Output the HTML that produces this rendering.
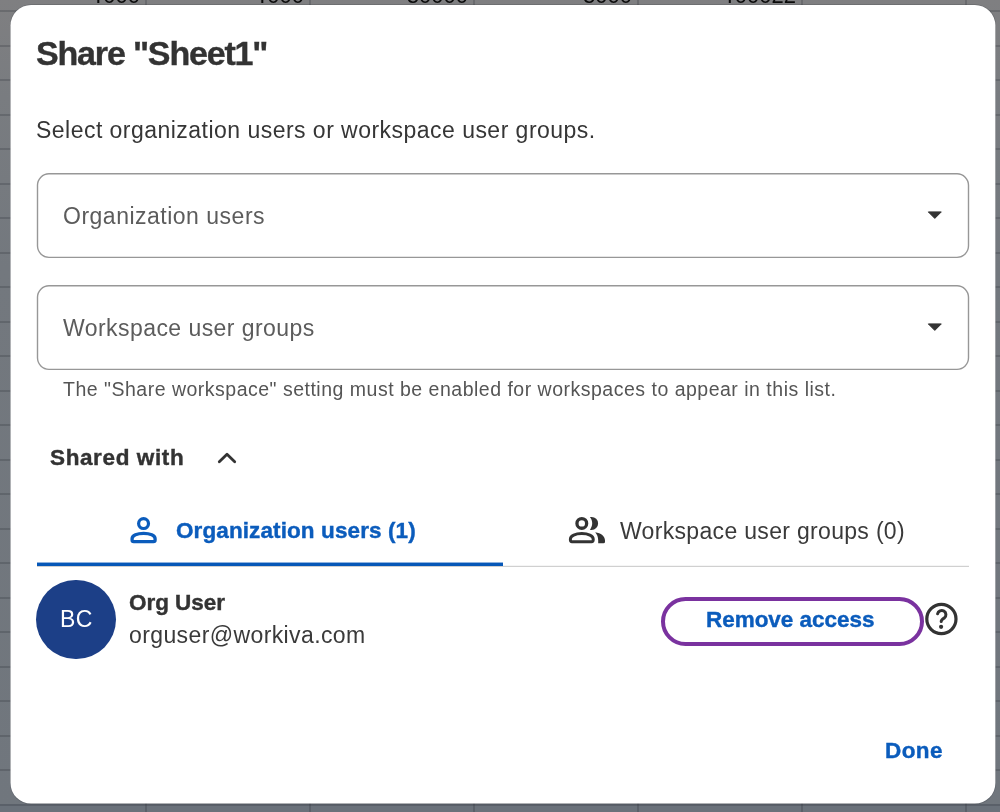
<!DOCTYPE html>
<html>
<head>
<meta charset="utf-8">
<title>Share Sheet1</title>
<style>
html,body{margin:0;padding:0;}
body{width:1000px;height:812px;overflow:hidden;position:relative;font-family:"Liberation Sans",sans-serif;
background:linear-gradient(180deg,#7f7f81 0%,#797c80 12%,#73787e 33%,#70767d 100%);}
.hl{position:absolute;left:0;width:1000px;height:2px;background:rgba(45,50,58,0.26);}
.vl{position:absolute;top:0;width:2px;height:812px;background:rgba(45,50,58,0.26);}
.num{position:absolute;top:-14.6px;font-size:22px;color:#0a0a0a;text-align:right;width:150px;white-space:nowrap;line-height:1;will-change:transform;}
#modal{position:absolute;left:0;top:0;}
#bot{position:absolute;left:0;top:804px;width:1000px;height:8px;background:#6a717a;}
.num b{display:inline-block;width:12.2px;text-align:center;font-weight:normal;text-indent:2px;}
#shared,#name,#title{-webkit-text-stroke:0.4px #333;}#tab1,#btntxt,#done{-webkit-text-stroke:0.4px #0b5cbc;}
.abs{position:absolute;white-space:nowrap;line-height:1;will-change:transform;}
#title{left:36px;top:35.5px;font-size:34px;font-weight:bold;color:#333;letter-spacing:-1.17px;}
#sub{left:36px;top:119px;font-size:23px;color:#363636;letter-spacing:0.47px;}
.sel{position:absolute;left:36.5px;width:932.5px;height:84px;box-sizing:border-box;}
.sel span{position:absolute;left:26.5px;top:31.1px;font-size:23px;color:#5c5c5c;line-height:1;white-space:nowrap;letter-spacing:0.5px;will-change:transform;}
#help{left:63px;top:380px;font-size:19.5px;color:#555;letter-spacing:0.5px;}
#shared{left:49.6px;top:446.5px;font-size:22.5px;font-weight:bold;color:#333;letter-spacing:0.62px;}
#tab1{left:175.7px;top:519.6px;font-size:22.5px;font-weight:bold;color:#0b5cbc;letter-spacing:0.1px;}
#tab2{left:620px;top:519.7px;font-size:23px;color:#3a3a3a;letter-spacing:0.32px;}
#tabline{display:none}
#tabsel{display:none}
#avatar{position:absolute;left:36.3px;top:579.8px;width:79.4px;height:79.4px;border-radius:50%;background:#1c3f87;}
#bc{left:60.2px;top:608px;font-size:23px;color:#fff;letter-spacing:0.3px;}
#name{left:128.6px;top:591.8px;font-size:22.5px;font-weight:bold;color:#333;letter-spacing:-0.05px;}
#email{left:128.8px;top:623.7px;font-size:23px;color:#3a3a3a;letter-spacing:0.39px;}
#btn{position:absolute;left:661.2px;top:597.2px;width:263.2px;height:48.6px;border:4px solid #7a329f;border-radius:25px;box-sizing:border-box;}
#btntxt{left:705.5px;top:608.8px;font-size:22.5px;font-weight:bold;color:#0b5cbc;letter-spacing:-0.04px;}
#done{left:885px;top:739.8px;font-size:22.5px;font-weight:bold;color:#0b5cbc;letter-spacing:0.4px;}
svg{position:absolute;left:0;top:0;}
</style>
</head>
<body>
<div id="grid"><div id="bot"></div>
<div class="hl" style="top:10px"></div><div class="hl" style="top:44.5px"></div><div class="hl" style="top:79px"></div><div class="hl" style="top:113.5px"></div><div class="hl" style="top:148px"></div><div class="hl" style="top:182.5px"></div><div class="hl" style="top:217px"></div><div class="hl" style="top:251.5px"></div><div class="hl" style="top:286px"></div><div class="hl" style="top:320.5px"></div><div class="hl" style="top:355px"></div><div class="hl" style="top:389.5px"></div><div class="hl" style="top:424px"></div><div class="hl" style="top:458.5px"></div><div class="hl" style="top:493px"></div><div class="hl" style="top:527.5px"></div><div class="hl" style="top:562px"></div><div class="hl" style="top:596.5px"></div><div class="hl" style="top:631px"></div><div class="hl" style="top:665.5px"></div><div class="hl" style="top:700px"></div><div class="hl" style="top:734.5px"></div><div class="hl" style="top:769px"></div><div class="hl" style="top:803.5px"></div>
<div class="vl" style="left:145px"></div><div class="vl" style="left:309px"></div><div class="vl" style="left:473px"></div><div class="vl" style="left:637px"></div><div class="vl" style="left:801px"></div><div class="vl" style="left:965px"></div>
<div class="num" style="left:-10.5px"><b>I</b>000</div><div class="num" style="left:153.5px"><b>I</b>000</div><div class="num" style="left:317.5px">30000</div><div class="num" style="left:481.8px">3000</div><div class="num" style="left:646px"><b>I</b>00022</div>
</div>
<svg id="modal" width="1000" height="812" viewBox="0 0 1000 812"><rect x="10" y="4.3" width="986" height="800" rx="21" fill="rgba(40,44,52,0.25)"/><rect x="10.5" y="5" width="984.9" height="798.6" rx="20.5" fill="#fff"/></svg>
<div class="abs" id="title">Share "Sheet1"</div>
<div class="abs" id="sub">Select organization users or workspace user groups.</div>
<div class="sel" style="top:173.5px"><span>Organization users</span></div>
<div class="sel" style="top:285.5px"><span style="letter-spacing:0.44px">Workspace user groups</span></div>
<div class="abs" id="help">The "Share workspace" setting must be enabled for workspaces to appear in this list.</div>
<div class="abs" id="shared">Shared with</div>
<div class="abs" id="tab1">Organization users (1)</div>
<div class="abs" id="tab2">Workspace user groups (0)</div>
<div id="tabline"></div><div id="tabsel"></div>
<div id="avatar"></div>
<div class="abs" id="bc">BC</div>
<div class="abs" id="name">Org User</div>
<div class="abs" id="email">orguser@workiva.com</div>
<div id="btn"></div>
<div class="abs" id="btntxt">Remove access</div>
<div class="abs" id="done">Done</div>
<svg width="1000" height="812" viewBox="0 0 1000 812">
<rect x="37" y="565.8" width="932" height="1.1" fill="#cbcbcb"/><rect x="37" y="562.55" width="466" height="3.45" fill="#0758b8"/>
<rect x="37.5" y="173.8" width="931" height="83.55" rx="11.5" fill="none" stroke="#979797" stroke-width="1.4"/>
<rect x="37.5" y="285.8" width="931" height="83.55" rx="11.5" fill="none" stroke="#979797" stroke-width="1.4"/>
<path d="M928.3 211.9 h13 l-6.5 6.5 z" fill="#333" stroke="#333" stroke-width="1" stroke-linejoin="round"/>
<path d="M928.3 323.9 h13 l-6.5 6.5 z" fill="#333" stroke="#333" stroke-width="1" stroke-linejoin="round"/>
<path d="M219.3 461.8 L227 454.3 L234.7 461.8" fill="none" stroke="#333" stroke-width="2.8" stroke-linecap="round" stroke-linejoin="round"/>
<circle cx="143.55" cy="523.55" r="4.95" fill="none" stroke="#0b5cbc" stroke-width="3.2"/>
<path d="M133.7 541.55 H153.5 A1.6 1.6 0 0 0 155.1 539.95 V538.7 C155.1 535.4 150 533.3 143.6 533.3 C137.2 533.3 132.1 535.4 132.1 538.7 V539.95 A1.6 1.6 0 0 0 133.7 541.55 Z" fill="none" stroke="#0b5cbc" stroke-width="3.3" stroke-linejoin="round"/>
<circle cx="581.8" cy="523.4" r="4.85" fill="none" stroke="#333" stroke-width="3.3"/>
<path d="M572 541.7 H591.6 A1.6 1.6 0 0 0 593.2 540.1 V538.9 C593.2 535.6 588.2 533.6 581.8 533.6 C575.4 533.6 570.4 535.6 570.4 538.9 V540.1 A1.6 1.6 0 0 0 572 541.7 Z" fill="none" stroke="#333" stroke-width="3" stroke-linejoin="round"/>
<path d="M589.9 517.1 C590.8 516.9 591.2 516.9 591.6 516.9 A6.5 6.5 0 0 1 591.6 529.9 C591.2 529.9 590.6 529.9 589.9 529.7 C593 526 593 520.8 589.9 517.1 Z" fill="#333"/>
<path d="M595.2 532.3 C601 533 605 536.5 605 540.5 V541.7 A1.5 1.5 0 0 1 603.5 543.2 H598.2 V540.5 C598.2 537 597 534.5 595.2 532.3 Z" fill="#333"/>
<circle cx="941.4" cy="619" r="14.6" fill="none" stroke="#333" stroke-width="3.2"/>
<path d="M937.6 613.8 A4.2 4.2 0 1 1 944.4 617.9 Q941.2 619.8 941.2 621.6" fill="none" stroke="#333" stroke-width="3" stroke-linecap="round"/>
<circle cx="941.1" cy="626.8" r="2.1" fill="#333"/>
</svg>
</body>
</html>
